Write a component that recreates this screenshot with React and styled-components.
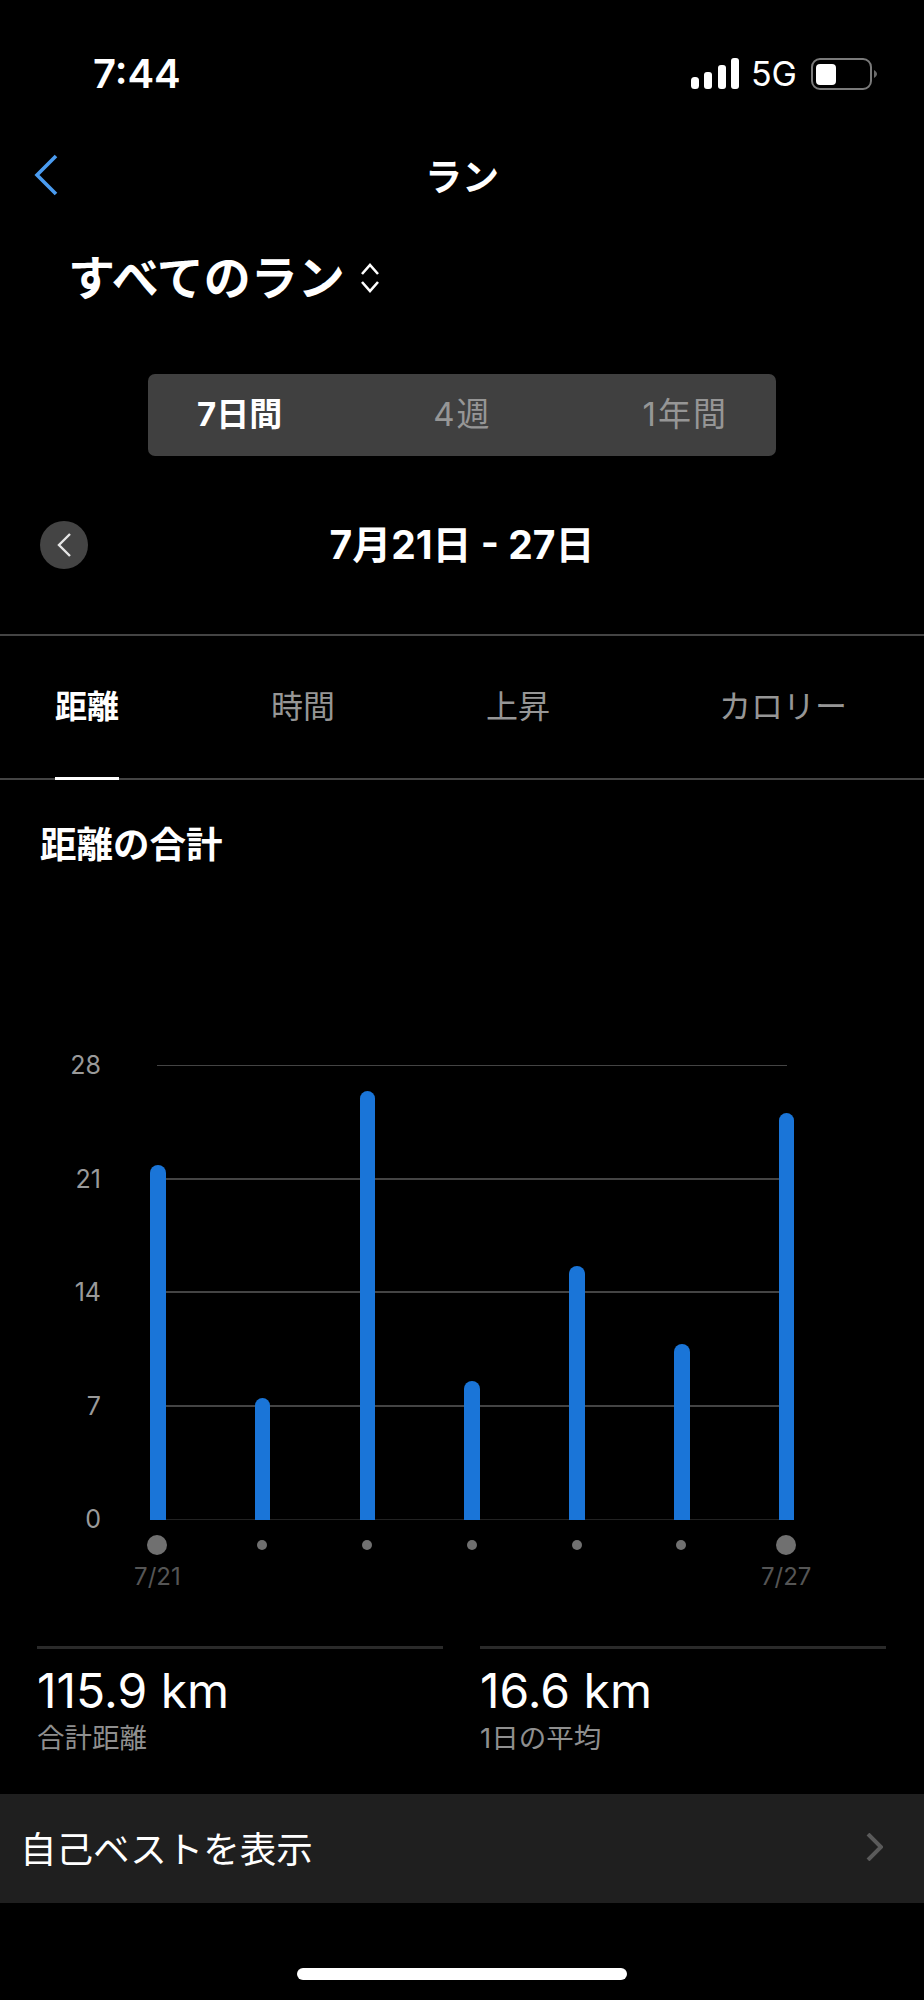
import React from "react";
import styled, { createGlobalStyle } from "styled-components";

const GlobalStyle = createGlobalStyle`
  html, body {
    margin: 0;
    background: #000000;
  }
  * {
    box-sizing: border-box;
  }
`;

const Page = styled.div`
  width: 924px;
  height: 2000px;
  background: #000000;
  color: #ffffff;
  font-family: Inter, "Noto Sans CJK JP", sans-serif;
  overflow: hidden;
`;

const StatusBar = styled.div`
  height: 145px;
  padding: 51px 46px 49px 93px;
  display: flex;
  justify-content: space-between;
  align-items: center;
`;
const Time = styled.div`
  font-size: 40px;
  line-height: 45px;
  font-weight: 600;
`;
const StatusIcons = styled.div`
  display: flex;
  align-items: center;
  gap: 12px;
`;
const Network = styled.span`
  margin-right: 2px;
  font-size: 34px;
  line-height: 45px;
  font-weight: 400;
`;

const NavBar = styled.div`
  height: 60px;
  padding: 0 34px;
  display: grid;
  grid-template-columns: 1fr auto 1fr;
  align-items: center;
`;
const NavTitle = styled.div`
  height: 60px;
  font-size: 37px;
  line-height: 66px;
  font-weight: 700;
`;

const Picker = styled.div`
  margin-top: 43px;
  height: 60px;
  padding-left: 68px;
  display: flex;
  align-items: center;
  gap: 15px;
`;
const PickerLabel = styled.div`
  font-size: 47px;
  line-height: 60px;
  font-weight: 700;
`;

const Segments = styled.div`
  margin: 66px 148px 0;
  height: 82px;
  padding: 0 48px 6px 49px;
  display: flex;
  justify-content: space-between;
  align-items: center;
  background: #404040;
  border-radius: 7px;
`;
const Segment = styled.div`
  font-size: 33px;
  font-weight: ${(props) => (props.active ? 700 : 400)};
  letter-spacing: ${(props) => (props.active ? "0" : "2px")};
  color: ${(props) => (props.active ? "#ffffff" : "#969696")};
`;

const DateRow = styled.div`
  margin-top: 64px;
  height: 49px;
  padding: 0 40px;
  display: grid;
  grid-template-columns: 1fr auto 1fr;
  align-items: center;
`;
const RoundButton = styled.div`
  width: 48px;
  height: 48px;
  border-radius: 50%;
  background: #444444;
  display: flex;
  align-items: center;
  justify-content: center;
`;
const DateLabel = styled.div`
  height: 49px;
  font-size: 39px;
  line-height: 49px;
  font-weight: 700;
`;

const Tabs = styled.div`
  margin-top: 65px;
  height: 146px;
  padding-left: 55px;
  border-top: 2px solid #444444;
  border-bottom: 2px solid #444444;
  display: grid;
  grid-template-columns: 216px 215px 233px 1fr;
`;
const Tab = styled.div`
  width: fit-content;
  height: 144px;
  padding-bottom: 6px;
  display: flex;
  align-items: center;
  font-size: 32px;
  font-weight: ${(props) => (props.active ? 700 : 400)};
  color: ${(props) => (props.active ? "#ffffff" : "#969696")};
  border-bottom: 3px solid ${(props) => (props.active ? "#ffffff" : "transparent")};
`;

const SectionTitle = styled.div`
  margin: 40px 0 0 40px;
  font-size: 36.5px;
  line-height: 50px;
  font-weight: 700;
`;

const Chart = styled.div`
  position: relative;
  margin-top: 180px;
  height: 484px;
  display: flex;
  flex-direction: column;
  justify-content: space-between;
`;
const GridRow = styled.div`
  height: 30px;
  display: flex;
  align-items: center;
`;
const AxisLabel = styled.div`
  width: 101px;
  text-align: right;
  font-size: 25px;
  color: #9a9a9a;
`;
const GridLine = styled.div`
  margin-left: 56px;
  width: 630px;
  height: ${(props) => (props.thin ? "1px" : "2px")};
  background: ${(props) => props.color || "#444444"};
`;
const BarLayer = styled.div`
  position: absolute;
  left: 150px;
  bottom: 14px;
  display: flex;
  align-items: flex-end;
  gap: 89.2px;
`;
const Bar = styled.div`
  width: 15.6px;
  background: #1a75d8;
  border-radius: 8px 8px 0 0;
`;

const XAxis = styled.div`
  margin-top: 1px;
  margin-left: 105px;
  display: grid;
  grid-template-columns: repeat(7, 104.8px);
`;
const Tick = styled.div`
  display: flex;
  flex-direction: column;
  align-items: center;
`;
const DotBox = styled.div`
  height: 20px;
  display: flex;
  align-items: center;
`;
const Dot = styled.div`
  width: ${(props) => (props.large ? "20px" : "10px")};
  height: ${(props) => (props.large ? "20px" : "10px")};
  border-radius: 50%;
  background: #707070;
`;
const TickLabel = styled.div`
  margin-top: 7px;
  height: 30px;
  font-size: 24px;
  line-height: 30px;
  color: #555555;
`;

const Stats = styled.div`
  margin-top: 54px;
  padding: 0 37px;
  display: grid;
  grid-template-columns: 406px 406px;
  gap: 37px;
`;
const Stat = styled.div`
  border-top: 3px solid #2a2a2a;
  padding-top: 15px;
`;
const StatValue = styled.div`
  font-size: 48px;
  line-height: 54px;
`;
const StatLabel = styled.div`
  margin-top: 1px;
  font-size: 27.5px;
  line-height: 38px;
  color: #8f8f8f;
`;

const LinkRow = styled.div`
  margin-top: 37px;
  height: 109px;
  padding: 0 41px 3px 20px;
  background: #1f1f1f;
  display: flex;
  justify-content: space-between;
  align-items: center;
  font-size: 36.5px;
`;

const HomeBar = styled.div`
  margin: 65px auto 0;
  width: 330px;
  height: 12px;
  border-radius: 6px;
  background: #ffffff;
`;

const Chevron = ({ points, color, size, width, height }) => (
  <svg width={width} height={height} viewBox={`0 0 ${width} ${height}`} fill="none">
    <polyline points={points} stroke={color} strokeWidth={size} />
  </svg>
);

const SignalIcon = () => (
  <svg width="48" height="32" viewBox="0 0 48 32" fill="#ffffff">
    <rect x="0" y="19" width="8" height="12" rx="3.5" />
    <rect x="13" y="14" width="8" height="17" rx="3" />
    <rect x="27" y="7" width="8" height="24" rx="3" />
    <rect x="40" y="0" width="8" height="31" rx="3" />
  </svg>
);

const BatteryIcon = () => (
  <svg width="67" height="32" viewBox="0 0 67 32" fill="none">
    <rect x="1" y="1" width="59" height="30" rx="8" stroke="#7a7a7a" strokeWidth="2" />
    <rect x="5" y="6" width="20" height="21" rx="4" fill="#ffffff" />
    <path d="M63 12 C65 13 66 15 66 16 C66 17 65 19 63 20 Z" fill="#6a6a6a" />
  </svg>
);

const SortIcon = () => (
  <svg width="20" height="30" viewBox="0 0 20 30" fill="none" stroke="#ffffff" strokeWidth="2.6">
    <polyline points="2,11 10,2 18,11" />
    <polyline points="2,19 10,28 18,19" />
  </svg>
);

const axisValues = [
  { label: "28", thin: true },
  { label: "21" },
  { label: "14" },
  { label: "7" },
  { label: "0", thin: true, color: "#222222" },
];

const barHeights = [355, 122, 429, 139, 254, 176, 407];
const ticks = ["7/21", "", "", "", "", "", "7/27"];

const App = () => {
  return (
    <Page>
      <GlobalStyle />
      <StatusBar>
        <Time>7:44</Time>
        <StatusIcons>
          <SignalIcon />
          <Network>5G</Network>
          <BatteryIcon />
        </StatusIcons>
      </StatusBar>

      <NavBar>
        <Chevron points="22,2 3,21 22,40" color="#4a9bf0" size="3.6" width="24" height="42" />
        <NavTitle>ラン</NavTitle>
      </NavBar>

      <Picker>
        <PickerLabel>すべてのラン</PickerLabel>
        <SortIcon />
      </Picker>

      <Segments>
        <Segment active>7日間</Segment>
        <Segment>4週</Segment>
        <Segment>1年間</Segment>
      </Segments>

      <DateRow>
        <RoundButton>
          <Chevron points="13,1 2,12 13,23" color="#e6e6e6" size="2.4" width="15" height="24" />
        </RoundButton>
        <DateLabel>7月21日 - 27日</DateLabel>
      </DateRow>

      <Tabs>
        <Tab active>距離</Tab>
        <Tab>時間</Tab>
        <Tab>上昇</Tab>
        <Tab>カロリー</Tab>
      </Tabs>

      <SectionTitle>距離の合計</SectionTitle>

      <Chart>
        {axisValues.map((item) => (
          <GridRow key={item.label}>
            <AxisLabel>{item.label}</AxisLabel>
            <GridLine thin={item.thin} color={item.color} />
          </GridRow>
        ))}
        <BarLayer>
          {barHeights.map((h, index) => (
            <Bar key={index} style={{ height: h }} />
          ))}
        </BarLayer>
      </Chart>

      <XAxis>
        {ticks.map((label, index) => (
          <Tick key={index}>
            <DotBox>
              <Dot large={label !== ""} />
            </DotBox>
            <TickLabel>{label}</TickLabel>
          </Tick>
        ))}
      </XAxis>

      <Stats>
        <Stat>
          <StatValue>115.9 km</StatValue>
          <StatLabel>合計距離</StatLabel>
        </Stat>
        <Stat>
          <StatValue>16.6 km</StatValue>
          <StatLabel>1日の平均</StatLabel>
        </Stat>
      </Stats>

      <LinkRow>
        自己ベストを表示
        <Chevron points="2,1 15,14 2,27" color="#5a5a5a" size="4" width="17" height="28" />
      </LinkRow>

      <HomeBar />
    </Page>
  );
};

export default App;
